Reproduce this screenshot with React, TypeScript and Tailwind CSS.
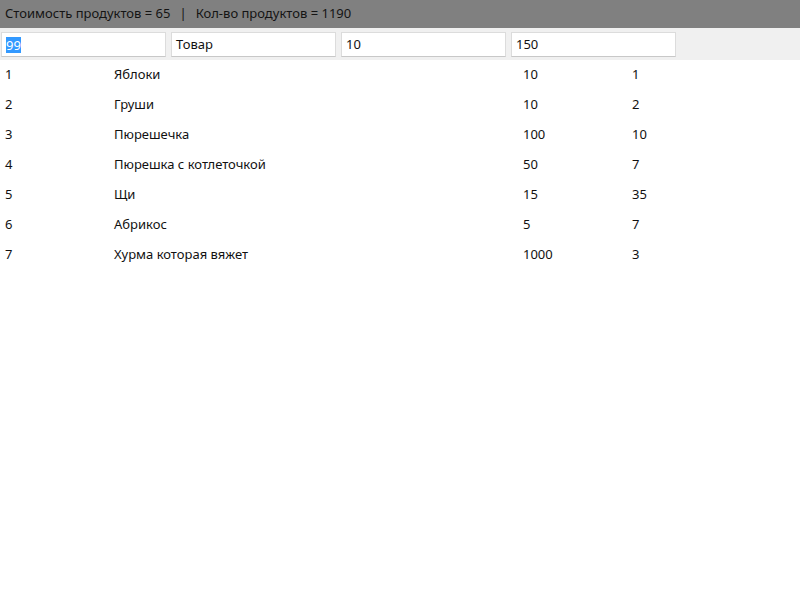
import React from 'react'

const rows = [
  { id: 1, name: 'Яблоки', price: 10, qty: 1 },
  { id: 2, name: 'Груши', price: 10, qty: 2 },
  { id: 3, name: 'Пюрешечка', price: 100, qty: 10 },
  { id: 4, name: 'Пюрешка с котлеточкой', price: 50, qty: 7 },
  { id: 5, name: 'Щи', price: 15, qty: 35 },
  { id: 6, name: 'Абрикос', price: 5, qty: 7 },
  { id: 7, name: 'Хурма которая вяжет', price: 1000, qty: 3 },
]

const Field = ({ value, selected }: { value: string; selected?: boolean }) => (
  <div className="w-[165px] h-[25px] bg-white border border-[#dcdcdc] border-b-[#c8c8c8] flex items-center px-[4px]">
    {selected ? <span className="bg-[#3399ff] text-white leading-[16px]">{value}</span> : <span>{value}</span>}
  </div>
)

export default function App() {
  return (
    <div className="w-[800px] h-[600px] bg-white text-[13px] text-[#111]" style={{ fontFamily: '"Noto Sans", "Open Sans", sans-serif' }}>
      <div className="h-[28px] bg-[#808080] flex items-center px-[5px] text-[#141414]">
        <span>Стоимость продуктов = 65</span>
        <span className="mx-[9px]">|</span>
        <span>Кол-во продуктов = 1190</span>
      </div>
      <div className="h-[32px] bg-[#f0f0f0] flex items-center gap-[5px] px-[1px] pt-[1px]">
        <Field value="99" selected />
        <Field value="Товар" />
        <Field value="10" />
        <Field value="150" />
      </div>
      <div>
        {rows.map((r) => (
          <div key={r.id} className="grid grid-cols-[109px_409px_109px_1fr] h-[30px] items-center pl-[5px]">
            <span>{r.id}</span>
            <span>{r.name}</span>
            <span>{r.price}</span>
            <span>{r.qty}</span>
          </div>
        ))}
      </div>
    </div>
  )
}
